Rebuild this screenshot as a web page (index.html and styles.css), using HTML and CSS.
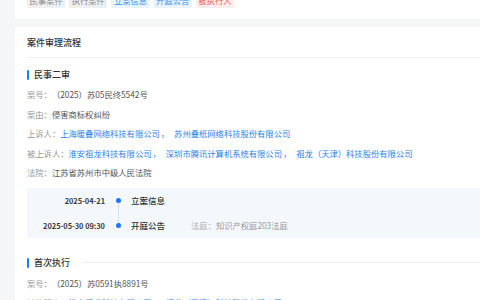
FILE: index.html
```html
<!DOCTYPE html>
<html lang="zh-CN">
<head>
    <meta charset="UTF-8">
    <meta name="viewport" content="width=device-width, initial-scale=1.0">
    <title>案件审理流程</title>
    <link rel="stylesheet" href="styles.css">
</head>
<body>
    <div class="page">
        <!-- 案件类型标签 -->
        <div class="card tagcard">
            <span class="tag grey">民事案件</span>
            <span class="tag grey">执行案件</span>
            <span class="tag blue">立案信息</span>
            <span class="tag blue">开庭公告</span>
            <span class="tag red">被执行人</span>
        </div>

        <div class="card flow">
            <div class="flow-title">案件审理流程</div>

            <div class="sec-head">民事二审</div>
            <div class="row"><span class="label">案号：</span><span class="val">（2025）苏05民终5542号</span></div>
            <div class="row"><span class="label">案由：</span><span class="val">侵害商标权纠纷</span></div>
            <div class="row">
                <span class="label">上诉人：</span>
                <a class="link">上海暖叠网络科技有限公司</a><span class="sep">，</span>
                <a class="link">苏州叠纸网络科技股份有限公司</a>
            </div>
            <div class="row">
                <span class="label">被上诉人：</span>
                <a class="link">淮安祖龙科技有限公司</a><span class="sep">，</span>
                <a class="link">深圳市腾讯计算机系统有限公司</a><span class="sep">，</span>
                <a class="link">祖龙（天津）科技股份有限公司</a>
            </div>
            <div class="row"><span class="label">法院：</span><span class="val">江苏省苏州市中级人民法院</span></div>

            <div class="timeline">
                <div class="tl-row">
                    <div class="tl-date">2025-04-21</div>
                    <div class="tl-axis"><i class="dot"></i></div>
                    <div class="tl-name">立案信息</div>
                </div>
                <div class="tl-row">
                    <div class="tl-date">2025-05-30 09:30</div>
                    <div class="tl-axis"><i class="dot"></i></div>
                    <div class="tl-name">开庭公告</div>
                    <div class="tl-info"><span class="lab">法庭：</span>知识产权庭203法庭</div>
                </div>
            </div>

            <div class="sec-head lined">首次执行</div>
            <div class="row"><span class="label">案号：</span><span class="val">（2025）苏0591执8891号</span></div>
            <div class="row">
                <span class="label">被执行人：</span>
                <a class="link">淮安祖龙科技有限公司</a><span class="sep">，</span>
                <a class="link">祖龙（天津）科技股份有限公司</a>
            </div>
        </div>
    </div>
</body>
</html>
```

FILE: styles.css
```css
*{
    margin: 0;
    padding: 0;
    box-sizing: border-box;
}
html,body{
    height: 100%;
    overflow: hidden;
}
body{
    background-color: #f5f6f7;
    font-family: "Noto Sans CJK SC", "Noto Sans", sans-serif;
    font-size: 8.3px;
    color: #555;
}
.page{
    margin-top: -20px;
    padding-left: 15px;
    width: 500px;
}
.card{
    background-color: #fff;
    padding: 0 12px;
}
.tagcard{
    display: flex;
    gap: 4px;
    padding-top: 12px;
    padding-bottom: 11px;
    margin-bottom: 8px;
}
.tag{
    height: 16px;
    line-height: 16px;
    padding: 0 2.5px;
    border-radius: 2px;
}
.grey{
    background-color: #efefef;
    color: #8c8c8c;
}
.blue{
    background-color: #e8f3ff;
    color: #3a8ef0;
}
.red{
    background-color: #fdeeed;
    color: #f05c5c;
}
.flow-title{
    font-size: 9px;
    font-weight: 500;
    color: #333;
    line-height: 12px;
    padding: 10px 0 8px;
    border-bottom: 1px solid #f0f0f0;
}
.sec-head{
    display: flex;
    align-items: center;
    font-size: 9px;
    font-weight: 500;
    color: #333;
    line-height: 12px;
    margin-top: 11px;
    margin-bottom: 3.3px;
}
.sec-head::before{
    content: "";
    width: 2px;
    height: 10px;
    background-color: #1a7ff0;
    border-radius: 1px;
    margin-right: 5px;
}
.sec-head.lined{
    margin-top: 19px;
    margin-bottom: 4px;
}
.sec-head.lined::after{
    content: "";
    flex: 1;
    border-top: 1px solid #eeeeee;
    margin-left: 12px;
}
.row{
    display: flex;
    align-items: center;
    height: 19.5px;
    white-space: nowrap;
}
.label{
    color: #999;
}
.val{
    color: #555;
}
.link{
    color: #2b84e6;
}
.sep{
    color: #2b84e6;
    padding-left: 1px;
    margin-right: 5px;
}
.timeline{
    margin-top: 6px;
    background-color: #f4f8fd;
    margin-right: -12px;
}
.tl-row{
    display: grid;
    grid-template-columns: 78px 26px auto auto;
    justify-content: start;
    align-items: center;
    height: 25px;
}
.tl-date{
    text-align: right;
    font-weight: 700;
    color: #3a3a3a;
    font-size: 7.4px;
}
.tl-axis{
    position: relative;
    height: 100%;
    display: flex;
    align-items: center;
    justify-content: center;
}
.tl-row:not(:last-child) .tl-axis::after{
    content: "";
    position: absolute;
    left: 12.5px;
    top: 50%;
    height: 100%;
    width: 1px;
    background-color: #cfe2fa;
}
.dot{
    position: relative;
    z-index: 1;
    width: 5px;
    height: 5px;
    border-radius: 50%;
    background-color: #1677ff;
}
.tl-name{
    color: #333;
    font-weight: 500;
    font-size: 8.5px;
}
.tl-info{
    margin-left: 26px;
    color: #999;
}
.tl-info .lab{
    color: #b0b0b0;
}
```
